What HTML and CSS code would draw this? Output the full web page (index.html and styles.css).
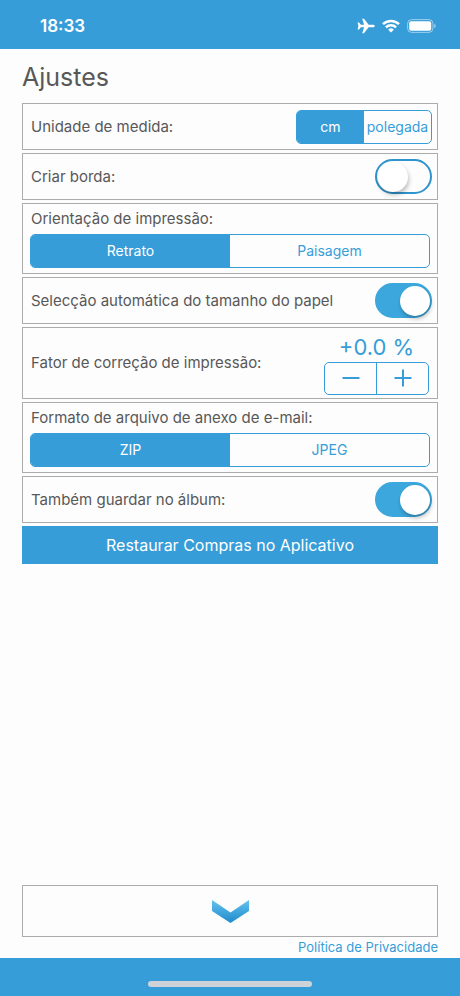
FILE: index.html
```
<!DOCTYPE html>
<html lang="pt">
<head>
  <meta charset="UTF-8">
  <meta name="viewport" content="width=device-width, initial-scale=1.0">
  <title>Ajustes</title>
  <link rel="stylesheet" href="styles.css">
</head>
<body>
  <!-- status bar -->
  <header class="status-bar">
    <span class="time">18:33</span>
    <div class="status-icons">
      <svg width="18" height="16" viewBox="0 0 18 16" fill="#fff" aria-hidden="true">
        <path d="M17.8 8c0 .8-1 1.300-2.200 1.300h-4L7 15.300H5.200l1.900-6H3.900L2 11.500H.6L1.400 8 .6 4.500H2l1.900 2.200h3.200l-1.900-6H7l4.600 6h4c1.200 0 2.200.5 2.200 1.300z"/>
      </svg>
      <svg width="18" height="14" viewBox="0 0 18 14" fill="none" stroke="#fff" stroke-width="2.500" aria-hidden="true">
        <path d="M1 5.200a11.500 11.500 0 0 1 16 0"/>
        <path d="M3.900 8.400a7.300 7.300 0 0 1 10.200 0"/>
        <path d="M9 13.500 6.200 10.700a4 4 0 0 1 5.600 0z" fill="#fff" stroke="none"/>
      </svg>
      <svg width="29" height="14" viewBox="0 0 29 14" aria-hidden="true">
        <rect x=".6" y=".6" width="25.300" height="12.800" rx="4" fill="none" stroke="#fff" stroke-opacity=".5"/>
        <rect x="2.200" y="2.200" width="22" height="9.600" rx="2" fill="#fff"/>
        <path d="M27.200 4.800c1 .4 1.500 1.200 1.500 2.200s-.5 1.800-1.500 2.200z" fill="#fff" fill-opacity=".5"/>
      </svg>
    </div>
  </header>

  <main class="settings">
    <h1>Ajustes</h1>

    <div class="row" role="radiogroup" aria-labelledby="unit-label">
      <span class="label" id="unit-label">Unidade de medida:</span>
      <div class="segmented small">
        <label><input type="radio" name="unit" value="cm" checked><span>cm</span></label>
        <label><input type="radio" name="unit" value="inch"><span>polegada</span></label>
      </div>
    </div>

    <div class="row">
      <label class="label" for="border-switch">Criar borda:</label>
      <input type="checkbox" class="switch" id="border-switch">
    </div>

    <div class="row stacked" role="radiogroup" aria-labelledby="orientation-label">
      <span class="label" id="orientation-label">Orientação de impressão:</span>
      <div class="segmented">
        <label><input type="radio" name="orientation" value="portrait" checked><span>Retrato</span></label>
        <label><input type="radio" name="orientation" value="landscape"><span>Paisagem</span></label>
      </div>
    </div>

    <div class="row">
      <label class="label" for="paper-switch">Selecção automática do tamanho do papel</label>
      <input type="checkbox" class="switch" id="paper-switch" checked>
    </div>

    <div class="row tall">
      <span class="label">Fator de correção de impressão:</span>
      <div class="correction">
        <output id="factor">+0.0 %</output>
        <div class="stepper">
          <button type="button" aria-label="Diminuir">
            <svg width="18" height="18" viewBox="0 0 18 18"><path d="M0.500 9h17"/></svg>
          </button>
          <button type="button" aria-label="Aumentar">
            <svg width="18" height="18" viewBox="0 0 18 18"><path d="M0.500 9h17M9 .5v17"/></svg>
          </button>
        </div>
      </div>
    </div>

    <div class="row stacked" role="radiogroup" aria-labelledby="format-label">
      <span class="label" id="format-label">Formato de arquivo de anexo de e-mail:</span>
      <div class="segmented">
        <label><input type="radio" name="format" value="zip" checked><span>ZIP</span></label>
        <label><input type="radio" name="format" value="jpeg"><span>JPEG</span></label>
      </div>
    </div>

    <div class="row">
      <label class="label" for="album-switch">Também guardar no álbum:</label>
      <input type="checkbox" class="switch" id="album-switch" checked>
    </div>

    <button type="button" class="restore-btn">Restaurar Compras no Aplicativo</button>

    <div class="bottom">
      <button type="button" class="close-btn" aria-label="Fechar">
        <svg width="38" height="24" viewBox="0 0 38 24">
          <defs>
            <linearGradient id="chevron" x1="0" y1="0" x2="0" y2="1">
              <stop offset="0" stop-color="#62c3ee"/>
              <stop offset="1" stop-color="#2089cc"/>
            </linearGradient>
          </defs>
          <path d="M1 1 19.500 13.500 38 1V12L19.500 24 1 12z" fill="url(#chevron)"/>
        </svg>
      </button>
      <a class="privacy" href="#">Política de Privacidade</a>
    </div>
  </main>

  <footer class="home-bar"><span class="home-indicator"></span></footer>
</body>
</html>
```
FILE: styles.css
```
* {
  margin: 0;
  padding: 0;
  box-sizing: border-box;
}

body {
  font-family: Inter, "Liberation Sans", sans-serif;
  background-color: #fdfdfd;
  color: #585858;
  display: flex;
  flex-direction: column;
  min-height: 100vh;
}

button {
  font-family: inherit;
  cursor: pointer;
}

/* Status bar */
.status-bar {
  display: flex;
  justify-content: space-between;
  align-items: center;
  height: 49px;
  padding: 2px 24px 0 40px;
  background-color: #369dd9;
  color: #fff;
}

.time {
  font-size: 17px;
  font-weight: 600;
}

.status-icons {
  display: flex;
  align-items: center;
  gap: 7px;
}

/* Settings list */
.settings {
  flex: 1;
  display: flex;
  flex-direction: column;
  gap: 3px;
  padding: 12px 22px 2px;
}

h1 {
  font-size: 25px;
  font-weight: 400;
  line-height: 32px;
  margin-bottom: 7px;
}

.row {
  display: flex;
  justify-content: space-between;
  align-items: center;
  min-height: 47px;
  padding: 0 5px 0 8px;
  border: 1px solid #acacac;
}

.row.stacked {
  flex-direction: column;
  align-items: stretch;
  padding: 5px 7px;
}

.row.tall {
  min-height: 72px;
  padding-right: 8px;
}

.label {
  font-size: 15px;
  line-height: 20px;
}

.stacked .label {
  padding-left: 1px;
  margin-bottom: 5px;
}

/* Segmented control */
.segmented {
  display: flex;
  border: 1px solid #369dd9;
  border-radius: 5px;
  overflow: hidden;
}

.segmented.small {
  width: 136px;
}

.segmented label {
  flex: 1 1 0;
  position: relative;
  cursor: pointer;
}

.segmented input {
  position: absolute;
  opacity: 0;
}

.segmented span {
  display: block;
  font-size: 14px;
  line-height: 32px;
  text-align: center;
  color: #369dd9;
}

.segmented input:checked + span {
  background-color: #369dd9;
  color: #fff;
}

/* Switch */
.switch {
  appearance: none;
  flex: none;
  display: flex;
  align-items: center;
  width: 57px;
  height: 35px;
  padding: 0 1px;
  border: 2px solid #2f93cc;
  border-radius: 18px;
  cursor: pointer;
}

.switch::before {
  content: "";
  width: 30px;
  height: 30px;
  border-radius: 50%;
  background-color: #fff;
  box-shadow: 1px 3px 4px rgba(0, 0, 0, 0.25);
}

.switch:checked {
  justify-content: flex-end;
  padding: 0;
  border-color: #3ba7dc;
  background-color: #3ba7dc;
}

/* Stepper */
.correction {
  width: 105px;
  text-align: center;
}

output {
  display: block;
  font-size: 22px;
  line-height: 30px;
  color: #369dd9;
}

.stepper {
  display: flex;
  border: 1px solid #369dd9;
  border-radius: 5px;
}

.stepper button {
  flex: 1;
  display: flex;
  justify-content: center;
  align-items: center;
  height: 31px;
  border: none;
  background: none;
}

.stepper button + button {
  border-left: 1px solid #369dd9;
}

.stepper path {
  stroke: #369dd9;
  stroke-width: 2;
}

.restore-btn {
  height: 38px;
  border: none;
  background-color: #369dd9;
  color: #fff;
  font-size: 16px;
}

/* Bottom */
.bottom {
  display: flex;
  flex-direction: column;
  gap: 1px;
  margin-top: auto;
}

.close-btn {
  display: flex;
  justify-content: center;
  align-items: center;
  height: 52px;
  border: 1px solid #acacac;
  background: none;
}

.privacy {
  align-self: flex-end;
  font-size: 13px;
  line-height: 18px;
  color: #369dd9;
  text-decoration: none;
}

.home-bar {
  display: flex;
  justify-content: center;
  align-items: flex-end;
  height: 38px;
  padding-bottom: 9px;
  background-color: #369dd9;
}

.home-indicator {
  width: 164px;
  height: 6px;
  border-radius: 3px;
  background-color: #cdd3d8;
}
```
